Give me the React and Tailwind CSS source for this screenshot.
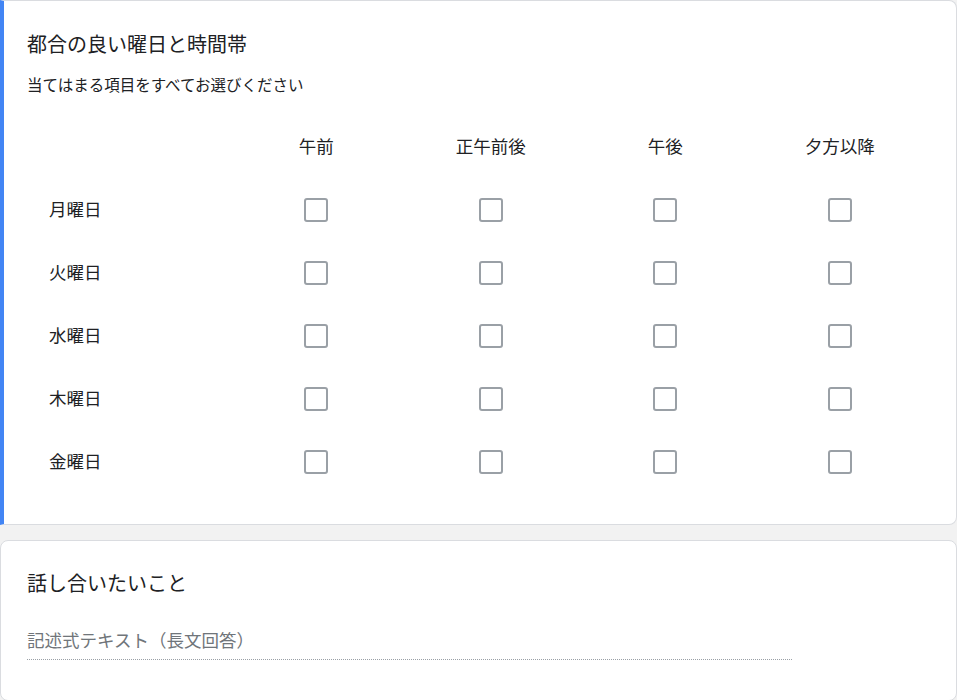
import React from "react";

const cols = ["午前", "正午前後", "午後", "夕方以降"];
const rows = ["月曜日", "火曜日", "水曜日", "木曜日", "金曜日"];

function Box() {
  return (
    <div className="w-[24px] h-[24px] border-2 border-[#9aa0a6] rounded-[3px] bg-white" />
  );
}

export default function App() {
  return (
    <div
      className="min-h-[700px] w-[957px] bg-[#f2f2f2] text-[#202124] overflow-hidden"
      style={{ fontFamily: '"Noto Sans CJK JP", "Noto Sans", sans-serif' }}
    >
      <div className="bg-white border border-[#dadce0] border-l-[4px] border-l-[#4285f4] rounded-r-[8px] pt-[29px] pb-[31px] pl-[23px] pr-[29px]">
        <div className="text-[20px] leading-[28px]">都合の良い曜日と時間帯</div>
        <div className="mt-[16px] text-[15.5px] leading-[20px]">当てはまる項目をすべてお選びください</div>
        <div className="mt-[20px] grid grid-cols-[202px_repeat(4,1fr)]">
          <div className="h-[64px]" />
          {cols.map((c) => (
            <div key={c} className="h-[64px] flex items-center justify-center text-[17.5px]">
              {c}
            </div>
          ))}
          {rows.map((r) => (
            <React.Fragment key={r}>
              <div className="h-[63px] flex items-center pl-[22px] text-[17.5px]">{r}</div>
              {cols.map((c) => (
                <div key={c} className="h-[63px] flex items-center justify-center">
                  <Box />
                </div>
              ))}
            </React.Fragment>
          ))}
        </div>
      </div>
      <div className="mt-[15px] bg-white border border-[#dadce0] rounded-[8px] pt-[28px] pb-[40px] pl-[26px] pr-[29px]">
        <div className="text-[20px] leading-[28px]">話し合いたいこと</div>
        <div className="mt-[31px] w-[765px] text-[17.5px] leading-[24px] text-[#70757a] pb-[7px] border-b border-dotted border-b-[#9aa0a6]">
          記述式テキスト（長文回答）
        </div>
      </div>
    </div>
  );
}
